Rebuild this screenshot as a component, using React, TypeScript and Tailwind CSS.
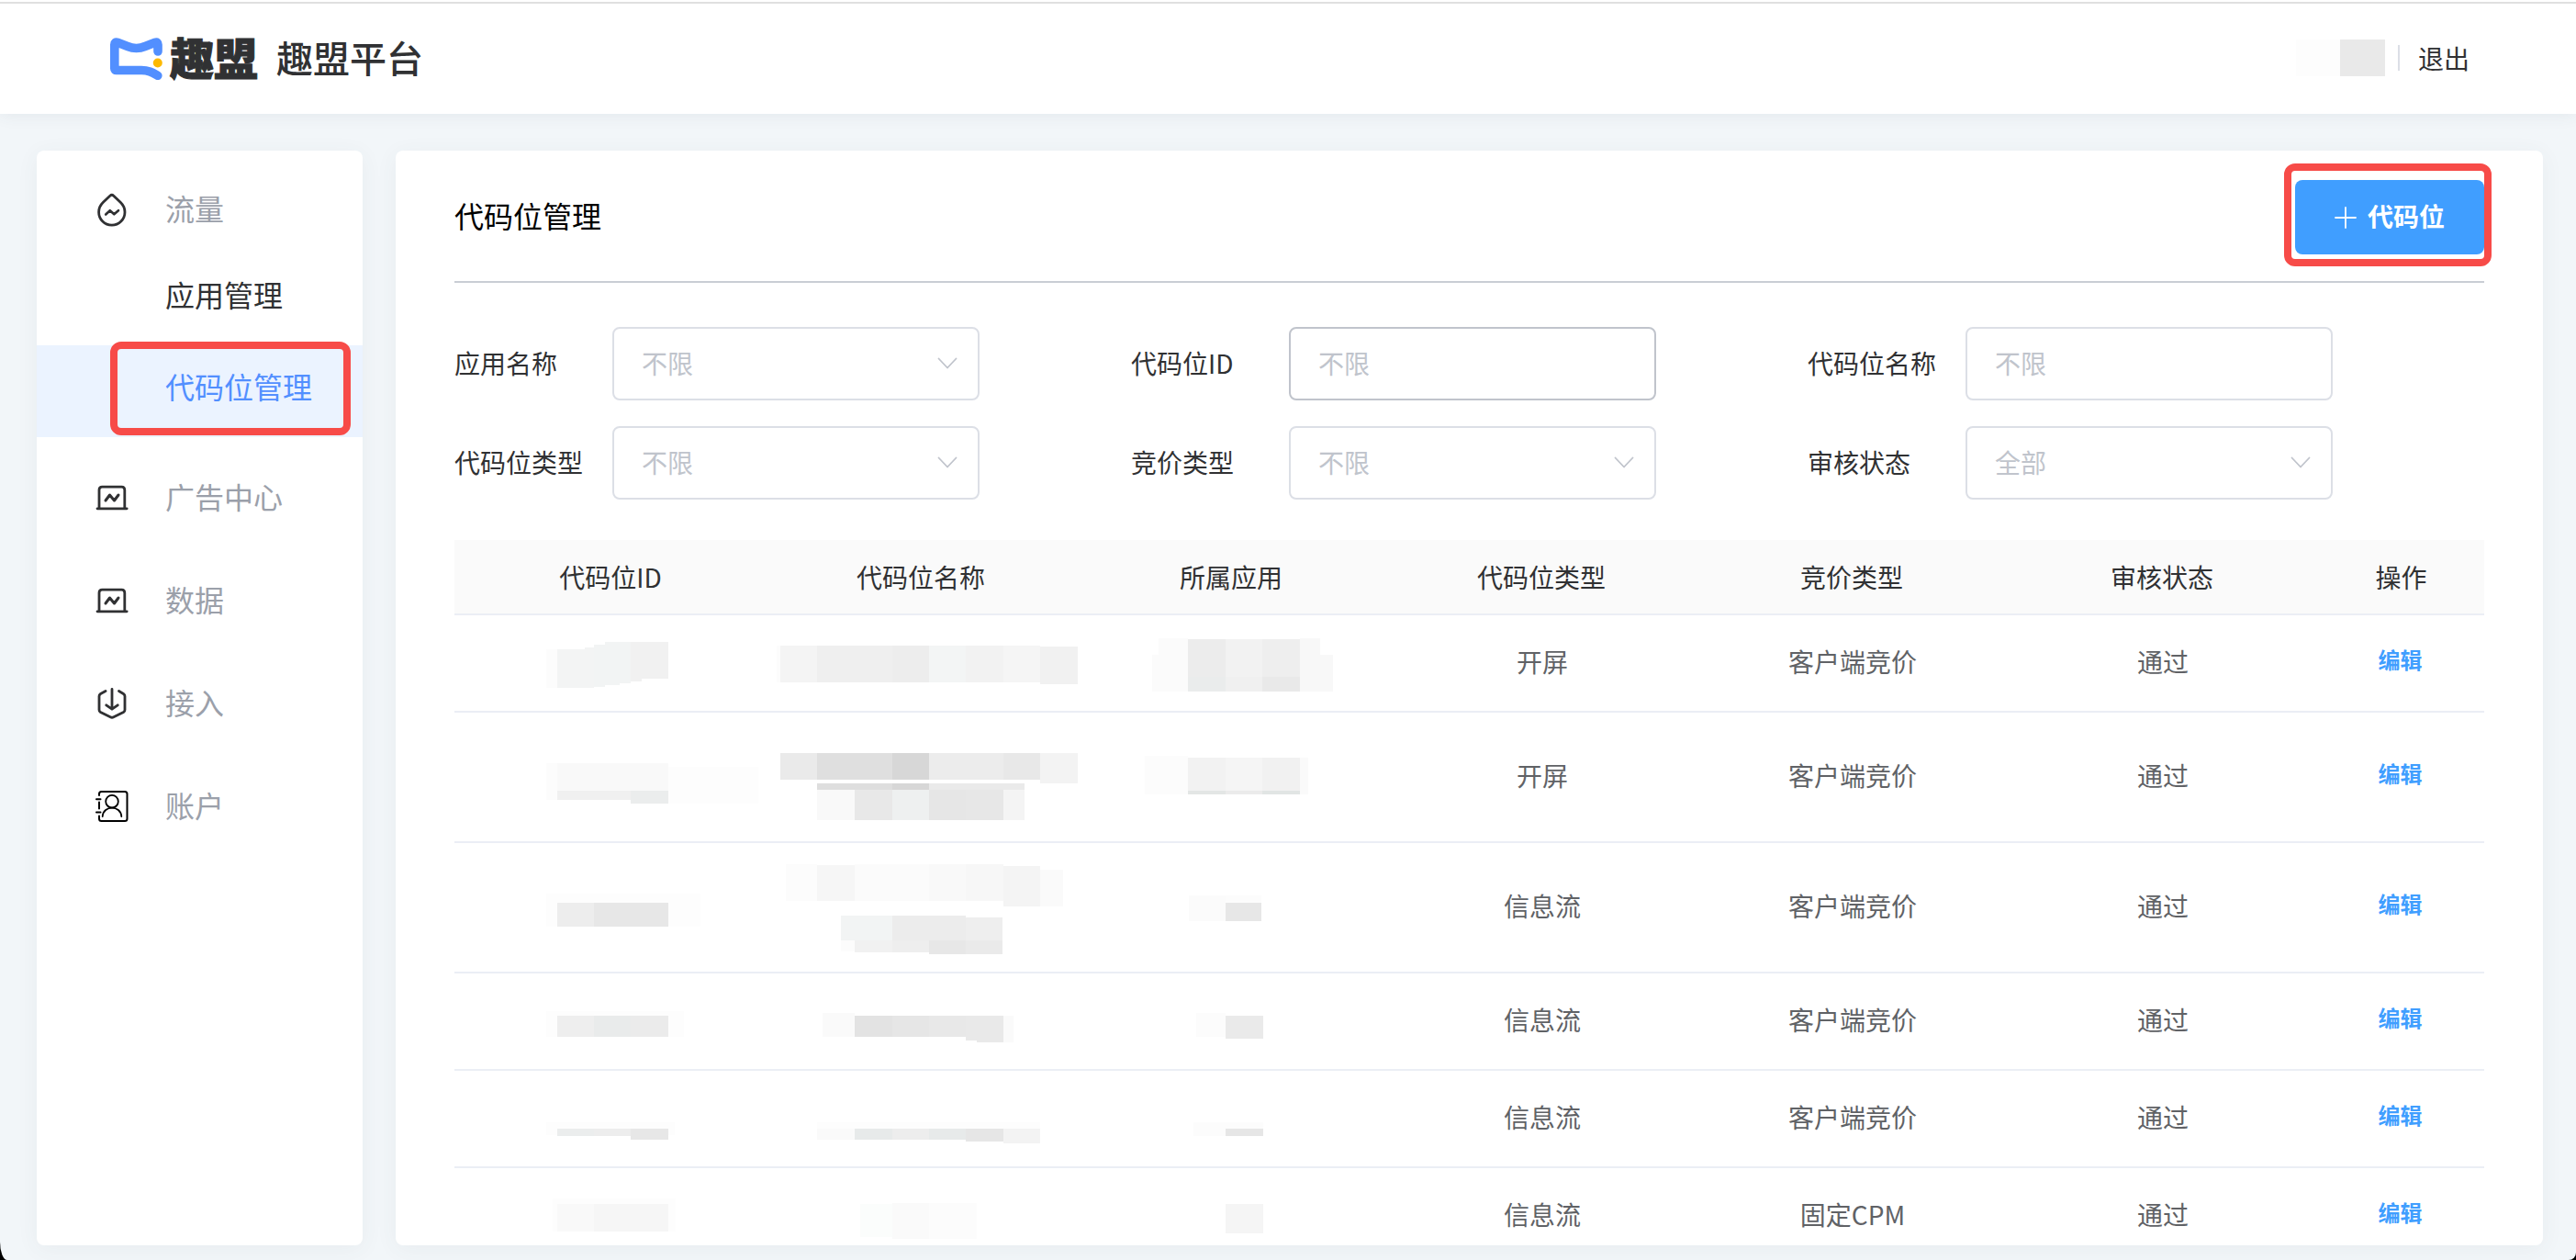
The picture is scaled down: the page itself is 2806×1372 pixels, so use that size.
import React from "react";

type Block = [x: number, y: number, w: number, h: number, fill: string];

/* ---------- icons ---------- */

const BrandMark = () => (
  <svg width="58" height="48" viewBox="119 40 58 48" fill="none" aria-hidden="true">
    <path
      d="M172 56V48.5C172 46.5 171 45.5 169 46.2L158 50.5Q148.500 54.500 139 50.500L128 46.200C126 45.500 124.800 46.500 124.800 48.500V74.500C124.800 75.800 125.500 76.500 126.800 76.500H154C162 76.500 166 79 171.800 82.300"
      stroke="#528fff"
      strokeWidth="9.600"
      strokeLinecap="round"
      strokeLinejoin="round"
    />
    <circle cx="171.800" cy="68.500" r="5" fill="#fdb900" />
  </svg>
);

const DropIcon = () => (
  <svg width="36" height="38" viewBox="104 210 36 38" fill="none" stroke="#303133" strokeLinecap="round" strokeLinejoin="round" aria-hidden="true">
    <path d="M119.800 214.200Q121.800 212.400 123.800 214.200L131.200 221.300C134.500 224.500 136 228 136 232A14.200 14.200 0 0 1 107.600 232C107.600 228 109.100 224.500 112.400 221.300Z" strokeWidth="2.800" />
    <path d="M115.200 234.500L119.800 230.200L124.300 234.300L129 230.200" strokeWidth="2.600" />
  </svg>
);

const LaptopIcon = () => (
  <svg width="36" height="38" viewBox="104 523 36 38" fill="none" stroke="#303133" strokeLinecap="round" strokeLinejoin="round" aria-hidden="true">
    <path d="M108 553.500V533.500Q108 530.200 111.300 530.200H132.500Q135.800 530.200 135.800 533.500V553.500M106 553.800H138.200" strokeWidth="2.800" />
    <path d="M115 545L119.500 539L124.500 545L129 539" strokeWidth="3" />
  </svg>
);

const ImportIcon = () => (
  <svg width="36" height="38" viewBox="104 746 36 38" fill="none" stroke="#303133" strokeLinecap="round" strokeLinejoin="round" strokeWidth="2.800" aria-hidden="true">
    <path d="M115 751.500L109.500 754.500Q108 755.500 108 757V772Q108 773.500 109.500 774.500L120.200 779.800Q122 780.700 123.800 779.800L134.500 774.500Q136 773.500 136 772V757Q136 755.500 134.500 754.500L129.500 751.500" />
    <path d="M122 749.500V771M115.800 766.800L122 771.200L128.200 766.800" />
  </svg>
);

const AccountIcon = () => (
  <svg width="36" height="38" viewBox="104 859 36 38" fill="none" stroke="#000" strokeLinecap="round" strokeWidth="2" aria-hidden="true">
    <path d="M108 866V864.500Q108 862 110.500 862H136Q138.500 862 138.500 864.500V891.500Q138.500 894 136 894H110.500Q108 894 108 891.500V888.500M108 873.500V880.500M105 870.300H109.500M105 884.600H109.500" />
    <circle cx="122" cy="872.700" r="6.800" strokeWidth="1.800" />
    <path d="M111.700 889C112.500 876.500 131.500 876.500 132.300 889" strokeWidth="1.800" />
  </svg>
);

/* ---------- sidebar ---------- */

const groups = [
  { name: "广告中心", Icon: LaptopIcon },
  { name: "数据", Icon: LaptopIcon },
  { name: "接入", Icon: ImportIcon },
  { name: "账户", Icon: AccountIcon },
];

const Sidebar = () => (
  <nav className="w-[355px] shrink-0 rounded-lg bg-white pt-4 text-[32px] leading-10 shadow-[0_4px_24px_rgba(60,80,90,0.06)]">
    <button type="button" className="flex h-24 w-full items-center gap-10 pl-16 text-[#9ba0aa]">
      <DropIcon />
      <span className="pb-1">流量</span>
    </button>
    <a href="#apps" className="flex h-[100px] items-center pb-3 pl-[140px] text-[#303133]">
      应用管理
    </a>
    <a href="#slots" aria-current="page" className="relative flex h-[100px] items-center bg-[#ebf3ff] pb-3 pl-[140px] text-[#528fff]">
      代码位管理
      <span className="absolute -top-1 right-[13px] bottom-0.5 left-20 rounded-xl border-8 border-[#f74b48]" />
    </a>
    <div className="mt-2.5">
      {groups.map(({ name, Icon }) => (
        <button key={name} type="button" className="flex h-28 w-full items-center gap-10 pl-16 text-[#9ba0aa]">
          <Icon />
          <span className="pb-1">{name}</span>
        </button>
      ))}
    </div>
  </nav>
);

/* ---------- filters ---------- */

type Filter = { id: string; label: string; value: string; select?: boolean; strong?: boolean };

const filters: Filter[] = [
  { id: "app", label: "应用名称", value: "不限", select: true },
  { id: "slot-id", label: "代码位ID", value: "不限", strong: true },
  { id: "slot-name", label: "代码位名称", value: "不限" },
  { id: "slot-type", label: "代码位类型", value: "不限", select: true },
  { id: "bid-type", label: "竞价类型", value: "不限", select: true },
  { id: "status", label: "审核状态", value: "全部", select: true },
];

const FilterField = ({ id, label, value, select, strong }: Filter) => (
  <div className="flex items-center">
    <label htmlFor={id} className="w-[172px] shrink-0 pb-0.5 text-[#303133]">
      {label}
    </label>
    <div className="relative w-[400px]">
      {select ? (
        <>
          <select id={id} className="h-20 w-full appearance-none rounded-lg border-2 border-[#dcdfe6] bg-white px-[30px] pb-0.5 text-[#c0c4cc]">
            <option>{value}</option>
          </select>
          <svg className="pointer-events-none absolute top-8 right-6" width="22" height="16" viewBox="0 0 22 16" fill="none" stroke="#c0c4cc" strokeWidth="1.800" strokeLinecap="round" strokeLinejoin="round" aria-hidden="true">
            <path d="M1.500 2.500L11 12.500L20.500 2.500" />
          </svg>
        </>
      ) : (
        <input
          id={id}
          type="text"
          placeholder={value}
          className={
            strong
              ? "h-20 w-full rounded-lg border-2 border-[#c0c4cc] px-[30px] pb-0.5 placeholder:text-[#c0c4cc]"
              : "h-20 w-full rounded-lg border-2 border-[#dcdfe6] px-[30px] pb-0.5 placeholder:text-[#c0c4cc]"
          }
        />
      )}
    </div>
  </div>
);

/* ---------- table ---------- */

const columns = ["代码位ID", "代码位名称", "所属应用", "代码位类型", "竞价类型", "审核状态", "操作"];

/* Masked values are drawn as mosaics; each row keeps its blocks in one shared coordinate space. */
type Row = { top: number; height: number; type: string; bid: string; masks: [Block[], Block[], Block[]] };

const rows: Row[] = [
  {
    top: 669,
    height: 104,
    type: "开屏",
    bid: "客户端竞价",
    masks: [
      [
        [595, 706, 12, 42, "#fcfcfc"],
        [607, 706, 30, 42, "#f3f4f4"],
        [637, 704, 10, 44, "#f3f4f4"],
        [647, 701, 12, 46, "#f2f4f4"],
        [659, 698, 16, 47, "#f2f4f4"],
        [675, 698, 12, 45, "#f2f4f4"],
        [687, 698, 41, 40, "#f1f1f1"],
        [687, 738, 12, 3, "#f1f1f1"],
      ],
      [
        [846, 702, 4, 40, "#fcfcfc"],
        [850, 702, 40, 40, "#f4f4f4"],
        [890, 702, 82, 40, "#efefef"],
        [972, 702, 40, 40, "#ededed"],
        [1012, 702, 40, 40, "#f3f5f5"],
        [1052, 702, 41, 40, "#f2f2f2"],
        [1093, 702, 40, 40, "#f5f5f5"],
        [1133, 703, 41, 41, "#f1f1f1"],
      ],
      [
        [1255, 712, 7, 40, "#fbfbfb"],
        [1262, 694, 32, 58, "#fbfbfb"],
        [1294, 695, 41, 41, "#ececec"],
        [1335, 695, 40, 41, "#f2f2f2"],
        [1375, 695, 41, 41, "#eeeeee"],
        [1294, 736, 41, 16, "#eaecec"],
        [1335, 736, 40, 16, "#f0f0f0"],
        [1375, 736, 41, 16, "#e9e9e9"],
        [1416, 694, 22, 58, "#f8f8f8"],
        [1438, 712, 14, 40, "#f8f8f8"],
      ],
    ],
  },
  {
    top: 775,
    height: 140,
    type: "开屏",
    bid: "客户端竞价",
    masks: [
      [
        [595, 830, 12, 40, "#fcfcfc"],
        [607, 830, 121, 30, "#f9f9f9"],
        [607, 860, 80, 10, "#f0f0f0"],
        [687, 860, 41, 14, "#ebeded"],
        [728, 834, 98, 40, "#fdfdfd"],
      ],
      [
        [850, 819, 40, 29, "#eaeaea"],
        [890, 819, 82, 29, "#dfdfdf"],
        [972, 819, 40, 29, "#d7d7d7"],
        [1012, 819, 81, 29, "#ececec"],
        [1093, 819, 40, 29, "#e8e8e8"],
        [1133, 819, 41, 33, "#f3f3f3"],
        [890, 852, 82, 7, "#dedede"],
        [972, 852, 40, 7, "#d7d7d7"],
        [1012, 852, 104, 7, "#eaeaea"],
        [890, 859, 41, 33, "#f9f9f9"],
        [931, 859, 41, 33, "#e8e8e8"],
        [972, 859, 40, 33, "#eef0f0"],
        [1012, 859, 40, 33, "#e6e6e6"],
        [1052, 859, 41, 33, "#e7e7e7"],
        [1093, 859, 23, 33, "#f4f4f4"],
      ],
      [
        [1247, 822, 47, 42, "#fcfcfc"],
        [1294, 824, 41, 36, "#f2f2f2"],
        [1335, 824, 40, 36, "#f5f5f5"],
        [1375, 824, 41, 36, "#f1f1f1"],
        [1294, 860, 41, 4, "#e3e6e5"],
        [1335, 860, 40, 4, "#ebebeb"],
        [1375, 860, 41, 4, "#e1e5e4"],
        [1416, 824, 9, 40, "#fafafa"],
      ],
    ],
  },
  {
    top: 917,
    height: 140,
    type: "信息流",
    bid: "客户端竞价",
    masks: [
      [
        [595, 972, 168, 36, "#fdfdfd"],
        [607, 982, 40, 26, "#ededed"],
        [647, 982, 81, 26, "#e7e7e7"],
      ],
      [
        [856, 940, 34, 40, "#fcfcfc"],
        [890, 941, 41, 39, "#f6f6f6"],
        [931, 940, 81, 40, "#fbfbfb"],
        [1012, 940, 40, 40, "#f9f9f9"],
        [1052, 940, 41, 40, "#f7f7f7"],
        [1093, 942, 40, 44, "#f4f4f4"],
        [1133, 946, 25, 40, "#fafafa"],
        [916, 996, 56, 27, "#f2f4f4"],
        [972, 996, 80, 27, "#ececec"],
        [1052, 998, 40, 25, "#eeeeee"],
        [916, 1023, 15, 12, "#fcfcfc"],
        [931, 1023, 41, 13, "#f1f1f1"],
        [972, 1023, 40, 13, "#eeeeee"],
        [1012, 1023, 40, 15, "#e7e7e7"],
        [1052, 1023, 40, 15, "#eaeaea"],
      ],
      [
        [1295, 974, 40, 28, "#fbfbfb"],
        [1335, 974, 39, 8, "#fcfcfc"],
        [1335, 982, 39, 20, "#e7e7e7"],
      ],
    ],
  },
  {
    top: 1059,
    height: 104,
    type: "信息流",
    bid: "客户端竞价",
    masks: [
      [
        [595, 1100, 150, 28, "#fdfdfd"],
        [607, 1105, 40, 23, "#eeeeee"],
        [647, 1105, 40, 23, "#e9ebeb"],
        [687, 1105, 41, 23, "#ebebeb"],
      ],
      [
        [896, 1102, 35, 26, "#fafafa"],
        [931, 1105, 41, 23, "#e3e3e3"],
        [972, 1105, 40, 23, "#e6e6e6"],
        [1012, 1105, 40, 23, "#e8e8e8"],
        [1052, 1105, 41, 27, "#e9e9e9"],
        [1064, 1132, 29, 2, "#e9e9e9"],
        [1093, 1105, 11, 29, "#fafafa"],
      ],
      [
        [1303, 1102, 32, 26, "#fcfcfc"],
        [1335, 1105, 41, 25, "#eaeaea"],
      ],
    ],
  },
  {
    top: 1165,
    height: 104,
    type: "信息流",
    bid: "客户端竞价",
    masks: [
      [
        [595, 1221, 140, 14, "#fdfdfd"],
        [607, 1228, 40, 8, "#ebeded"],
        [647, 1228, 40, 8, "#ededed"],
        [687, 1228, 41, 12, "#e7e7e7"],
      ],
      [
        [890, 1221, 243, 19, "#fdfdfd"],
        [890, 1228, 41, 12, "#fafafa"],
        [931, 1228, 41, 12, "#e7eaea"],
        [972, 1228, 40, 12, "#ededed"],
        [1012, 1228, 40, 12, "#e7eaea"],
        [1052, 1228, 41, 14, "#e6e6e6"],
        [1093, 1228, 40, 16, "#f3f3f3"],
      ],
      [
        [1300, 1221, 76, 15, "#fcfcfc"],
        [1335, 1228, 41, 8, "#e6e6e6"],
      ],
    ],
  },
  {
    top: 1271,
    height: 104,
    type: "信息流",
    bid: "固定CPM",
    masks: [
      [
        [602, 1304, 134, 36, "#fdfdfd"],
        [607, 1310, 40, 30, "#f9f9f9"],
        [647, 1310, 81, 30, "#f6f6f6"],
      ],
      [
        [937, 1310, 35, 36, "#fbfdfc"],
        [972, 1309, 40, 39, "#fafafa"],
        [1012, 1309, 52, 39, "#fcfcfc"],
      ],
      [[1335, 1310, 41, 32, "#f5f5f5"]],
    ],
  },
];

const Mosaic = ({ x, y, height, blocks }: { x: number; y: number; height: number; blocks: Block[] }) => (
  <svg className="mx-auto block overflow-visible" width="338" height={height} viewBox={`${x} ${y} 338 ${height}`} shapeRendering="crispEdges" aria-hidden="true">
    {blocks.map(([bx, by, w, h, fill], i) => (
      <rect key={i} x={bx} y={by} width={w} height={h} fill={fill} />
    ))}
  </svg>
);

const SlotTable = () => (
  <table className="mt-11 w-full table-fixed border-collapse text-center">
    <colgroup>
      <col span={6} />
      <col className="w-[183px]" />
    </colgroup>
    <thead>
      <tr className="h-[81px] border-b-2 border-[#ebeef5] bg-[#fafafa] text-[#303133]">
        {columns.map((c) => (
          <th key={c} scope="col" className="p-0 pl-0.5 font-normal">
            {c}
          </th>
        ))}
      </tr>
    </thead>
    <tbody className="text-[#606266]">
      {rows.map((row) => (
        <tr key={row.top} className="border-b-2 border-[#ebeef5]">
          {row.masks.map((blocks, i) => (
            <td key={i} className="p-0">
              <Mosaic x={495 + i * 338} y={row.top} height={row.height} blocks={blocks} />
            </td>
          ))}
          <td className="p-0 pb-1 pl-1">{row.type}</td>
          <td className="p-0 pb-1 pl-1">{row.bid}</td>
          <td className="p-0 pb-1 pl-1">通过</td>
          <td className="p-0 pb-1">
            <button type="button" className="block w-full pb-1 text-2xl leading-9 font-bold text-[#409eff]">
              编辑
            </button>
          </td>
        </tr>
      ))}
    </tbody>
  </table>
);

/* ---------- page ---------- */

export default function App() {
  return (
    <div className="h-screen overflow-hidden bg-black font-['Noto_Sans_CJK_SC','Liberation_Sans',sans-serif] text-[28px] leading-10">
      <div className="flex h-full flex-col overflow-hidden rounded-br-[8px] rounded-bl-[8px_20px] border-t-2 border-white bg-[#f2f6f9]">
        <header className="z-10 flex h-[122px] shrink-0 items-center justify-between border-t-2 border-[#e0e0e0] bg-white pr-[116px] pl-[119px] shadow-[0_2px_16px_rgba(60,80,90,0.08)]">
          <div className="flex items-center text-[#303133]">
            <BrandMark />
            <span className="ml-2 pb-1.5 text-5xl leading-none font-black [-webkit-text-stroke:1px_#303133]">趣盟</span>
            <h1 className="ml-5 pb-1 text-[40px] leading-none font-medium">趣盟平台</h1>
          </div>
          <div className="flex items-center pb-0.5">
            <span className="h-10 w-12 bg-[#fdfdfd]" />
            <span className="h-10 w-[49px] bg-[#e9e9e9]" />
            <span className="mr-5 ml-3.5 h-7 w-0.5 bg-[#dcdfe6]" />
            <button type="button" className="text-[#303133]">
              退出
            </button>
          </div>
        </header>

        <div className="flex min-h-0 flex-1 gap-9 px-10 pt-10 pr-9 pb-4">
          <Sidebar />
          <main className="min-w-0 flex-1 overflow-hidden rounded-lg bg-white px-16 pt-8 shadow-[0_4px_24px_rgba(60,80,90,0.06)]">
            <div className="flex h-28 items-start justify-between border-b-2 border-[#c9cdd4]">
              <h2 className="flex h-20 items-center pb-1 text-[32px] text-black">代码位管理</h2>
              <div className="relative">
                <button type="button" className="flex h-[81px] w-[206px] items-center justify-center gap-3 rounded-lg bg-[#409eff] font-bold text-white">
                  <svg width="24" height="24" viewBox="0 0 24 24" stroke="currentColor" strokeWidth="1.800" strokeLinecap="round" aria-hidden="true">
                    <path d="M12 1V23M1 12H23" />
                  </svg>
                  <span className="pb-1">代码位</span>
                </button>
                <span className="pointer-events-none absolute -top-[18px] -right-2 -bottom-[13px] -left-3 rounded-xl border-8 border-[#f74b48]" />
              </div>
            </div>

            <form className="mt-12 grid grid-cols-3 gap-y-7">
              {filters.map((f) => (
                <FilterField key={f.id} {...f} />
              ))}
            </form>

            <SlotTable />
          </main>
        </div>
      </div>
    </div>
  );
}
